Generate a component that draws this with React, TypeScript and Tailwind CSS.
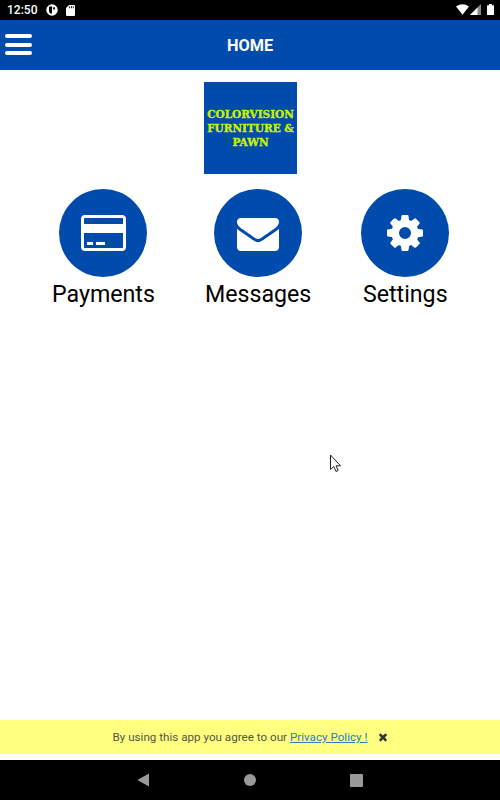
import React from "react";

const CardIcon = () => (
  <svg width="45" height="42" viewBox="0 0 1920 1792" fill="currentColor">
    <path d="M1760 128q66 0 113 47t47 113v1216q0 66-47 113t-113 47h-1600q-66 0-113-47t-47-113v-1216q0-66 47-113t113-47h1600zm-1600 128q-13 0-22.5 9.5t-9.5 22.5v224h1664v-224q0-13-9.5-22.5t-22.5-9.5h-1600zm1600 1280q13 0 22.5-9.5t9.5-22.5v-608h-1664v608q0 13 9.5 22.5t22.5 9.5h1600zm-1504-128v-128h256v128h-256zm384 0v-128h384v128h-384z" />
  </svg>
);

const MailIcon = () => (
  <svg width="42" height="42" viewBox="0 0 1792 1792" fill="currentColor">
    <path d="M1792 710v794q0 66-47 113t-113 47h-1472q-66 0-113-47t-47-113v-794q44 49 101 87 362 246 497 345 57 42 92.5 65.5t94.5 48 110 24.5h2q51 0 110-24.5t94.5-48 92.5-65.5q170-123 498-345 57-39 100-87zm0-294q0 79-49 151t-122 123q-376 261-468 325-10 7-42.5 31t-54 38.5-52 32.5-57.5 27-50 9h-2q-23 0-50-9t-57.5-27-52-32.5-54-38.5-42.5-31q-91-64-262-182.5t-205-142.5q-62-42-117-115.5t-55-136.5q0-78 41.5-130t118.5-52h1472q65 0 112.5 47t47.5 113z" />
  </svg>
);

const CogIcon = () => (
  <svg width="42" height="42" viewBox="0 0 1792 1792" fill="currentColor">
    <path d="M1152 896q0-106-75-181t-181-75-181 75-75 181 75 181 181 75 181-75 75-181zm512-109v222q0 12-8 23t-20 13l-185 28q-19 54-39 91 35 50 107 138 10 12 10 25t-9 23q-27 37-99 108t-94 71q-12 0-26-9l-138-108q-44 23-91 38-16 136-29 186-7 28-36 28h-222q-14 0-24.5-8.5t-11.5-21.5l-28-184q-49-16-90-37l-141 107q-10 9-25 9-14 0-25-11-126-114-165-168-7-10-7-23 0-12 8-23 15-21 51-66.5t54-70.5q-27-50-41-99l-183-27q-13-2-21-12.5t-8-23.5v-222q0-12 8-23t19-13l186-28q14-46 39-92-40-57-107-138-10-12-10-24 0-10 9-23 26-36 98.5-107.5t94.5-71.5q13 0 26 10l138 107q44-23 91-38 16-136 29-186 7-28 36-28h222q14 0 24.5 8.5t11.5 21.5l28 184q49 16 90 37l142-107q9-9 24-9 13 0 25 10 129 119 165 170 7 8 7 22 0 12-8 23-15 21-51 66.5t-54 70.5q26 50 41 98l183 28q13 2 21 12.5t8 23.5z" />
  </svg>
);

const CloseIcon = () => (
  <svg width="12" height="12" viewBox="0 0 1792 1792" fill="currentColor">
    <path d="M1490 1322q0 40-28 68l-136 136q-28 28-68 28t-68-28l-294-294-294 294q-28 28-68 28t-68-28l-136-136q-28-28-28-68t28-68l294-294-294-294q-28-28-28-68t28-68l136-136q28-28 68-28t68 28l294 294 294-294q28-28 68-28t68 28l136 136q28 28 28 68t-28 68l-294 294 294 294q28 28 28 68z" />
  </svg>
);

const StatusBar = () => (
  <div className="flex h-5 items-center bg-black pl-[7px] pr-[6px] text-white">
    <span className="w-[39px] text-[12px] font-medium leading-5">12:50</span>
    <svg width="12" height="12" viewBox="0 0 12 12">
      <circle cx="6" cy="6" r="5.7" fill="#fff" />
      <path d="M3 2.500h3.200v1H6v6H4.500Q3 8.500 3 7z" fill="#000" />
      <path d="M7.200 3.200H9v2.300H7.200z" fill="#000" />
    </svg>
    <svg className="ml-[8px]" width="9" height="11" viewBox="0 0 9 11">
      <path d="M3 0h5q1 0 1 1v9q0 1-1 1H1q-1 0-1-1V3z" fill="#fff" />
      <path d="M3.2 1.3h.9v2h-.9zM5 1.3h.9v2H5zM6.8 1.3h.9v2h-.9z" fill="#000" />
    </svg>
    <div className="ml-auto flex items-center pb-px">
      <svg width="13" height="11" viewBox="0 0 13 11">
        <path d="M0 2.6Q6.500-2.200 13 2.600L6.500 10.800z" fill="#fff" />
      </svg>
      <svg className="ml-px" width="11" height="11" viewBox="0 0 11 11">
        <path d="M11 0v11H0z" fill="#8a8a8a" />
        <path d="M7.500 3.500V11H0z" fill="#fff" />
      </svg>
      <svg className="ml-[6px]" width="7" height="11" viewBox="0 0 7 11">
        <path d="M2 0h3v1.200h1.500q.5 0 .5.600V10.500q0 .5-.5.500h-6q-.5 0-.5-.5V1.800q0-.6.500-.6H2z" fill="#fff" />
      </svg>
    </div>
  </div>
);

const Header = () => (
  <header className="grid h-[50px] grid-cols-[1fr_auto_1fr] items-center bg-[#004bac] text-white">
    <button className="flex w-8 flex-col gap-[4.500px] pb-px pl-[4.500px]">
      <span className="h-[4px] w-[27.500px] rounded-full bg-white"></span>
      <span className="h-[4px] w-[27.500px] rounded-full bg-white"></span>
      <span className="h-[4px] w-[27.500px] rounded-full bg-white"></span>
    </button>
    <h1 className="pt-[2px] text-[16.300px] font-bold leading-6">HOME</h1>
  </header>
);

const Tile = ({ label, icon }: { label: string; icon: React.ReactNode }) => (
  <div className="flex flex-col items-center">
    <div className="flex h-[88px] w-[88px] items-center justify-center rounded-full bg-[#004bac] pb-px text-white">
      {icon}
    </div>
    <span className="pt-px text-[23.200px] leading-8">{label}</span>
  </div>
);

const App = () => {
  return (
    <div className="flex h-[800px] w-[500px] flex-col overflow-hidden bg-white font-['Roboto',sans-serif] text-black">
      <StatusBar />
      <Header />

      <main className="flex-1">
        <div className="ml-[204px] mt-[12.400px] flex h-[92px] w-[93px] flex-col items-center justify-center bg-[#004bac] pt-px font-['DejaVu_Serif',serif] text-[10.500px] font-bold leading-[13.800px] text-[#c8f000] [-webkit-text-stroke:0.4px_#c8f000]">
          <span className="whitespace-nowrap">COLORVISION</span>
          <span className="whitespace-nowrap">FURNITURE &amp;</span>
          <span>PAWN</span>
        </div>

        <div className="mt-[15px] flex gap-[50px] pl-[52px]">
          <Tile label="Payments" icon={<CardIcon />} />
          <Tile label="Messages" icon={<MailIcon />} />
          <Tile label="Settings" icon={<CogIcon />} />
        </div>
      </main>

      {/* Privacy notice */}
      <div className="mb-[6.500px] flex h-[34px] items-center bg-[#ffff80] pl-[112.500px] pt-px text-[11.650px] text-[#55554a]">
        <p className="whitespace-nowrap pt-[2px]">
          By using this app you agree to our{" "}
          <a className="text-[#337ab7] underline">Privacy Policy !</a>
        </p>
        <button className="ml-[10px] text-[#333]">
          <CloseIcon />
        </button>
      </div>

      <nav className="flex h-10 items-center bg-black pl-[137px] text-[#999]">
        <svg width="12" height="14" viewBox="0 0 12 14" fill="currentColor">
          <path d="M12 .5v13L.3 7z" />
        </svg>
        <span className="ml-[95px] h-[12px] w-[12px] rounded-full bg-[#999]"></span>
        <span className="ml-[94px] h-[13px] w-[13px] rounded-[1px] bg-[#999]"></span>
      </nav>

      {/* Mouse pointer */}
      <svg className="absolute left-[329px] top-[454px]" width="13" height="19" viewBox="0 0 13 19">
        <path d="M1.500 1v14.500l3.300-3 2.200 5 2.200-1-2.200-4.700h4.500z" fill="#fff" stroke="#222" strokeWidth="1" />
      </svg>
    </div>
  );
};

export default App;
